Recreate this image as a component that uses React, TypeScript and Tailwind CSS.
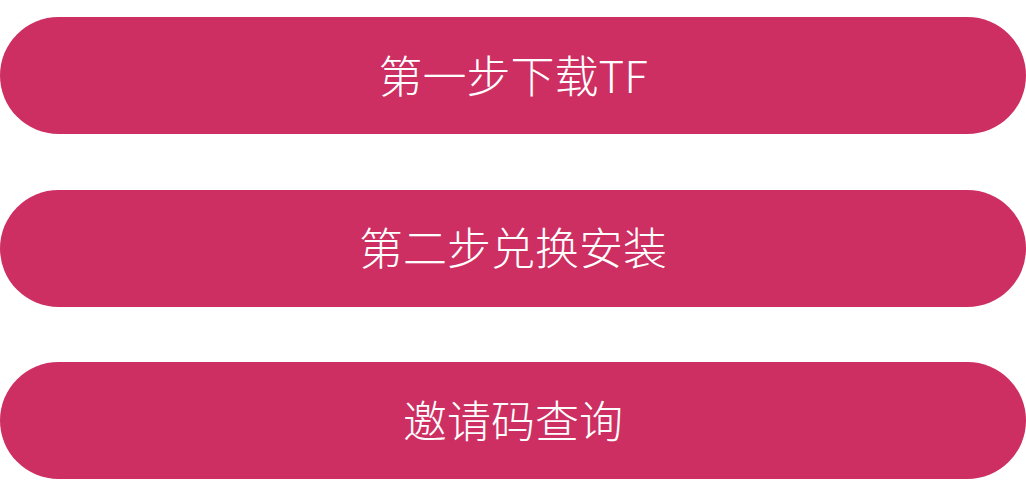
const steps = ['第一步下载TF', '第二步兑换安装', '邀请码查询'];

export default function App() {
  return (
    <div className="w-[1026px] h-[500px] bg-white pt-[17px] flex flex-col gap-[55.5px]">
      {steps.map((label) => (
        <button
          key={label}
          className="h-[117px] w-full rounded-full bg-[#cd2f63] text-white text-[44px] font-light pb-1 flex items-center justify-center"
          style={{ fontFamily: '"Noto Sans CJK SC", "Noto Sans", sans-serif' }}
        >
          {label}
        </button>
      ))}
    </div>
  );
}
